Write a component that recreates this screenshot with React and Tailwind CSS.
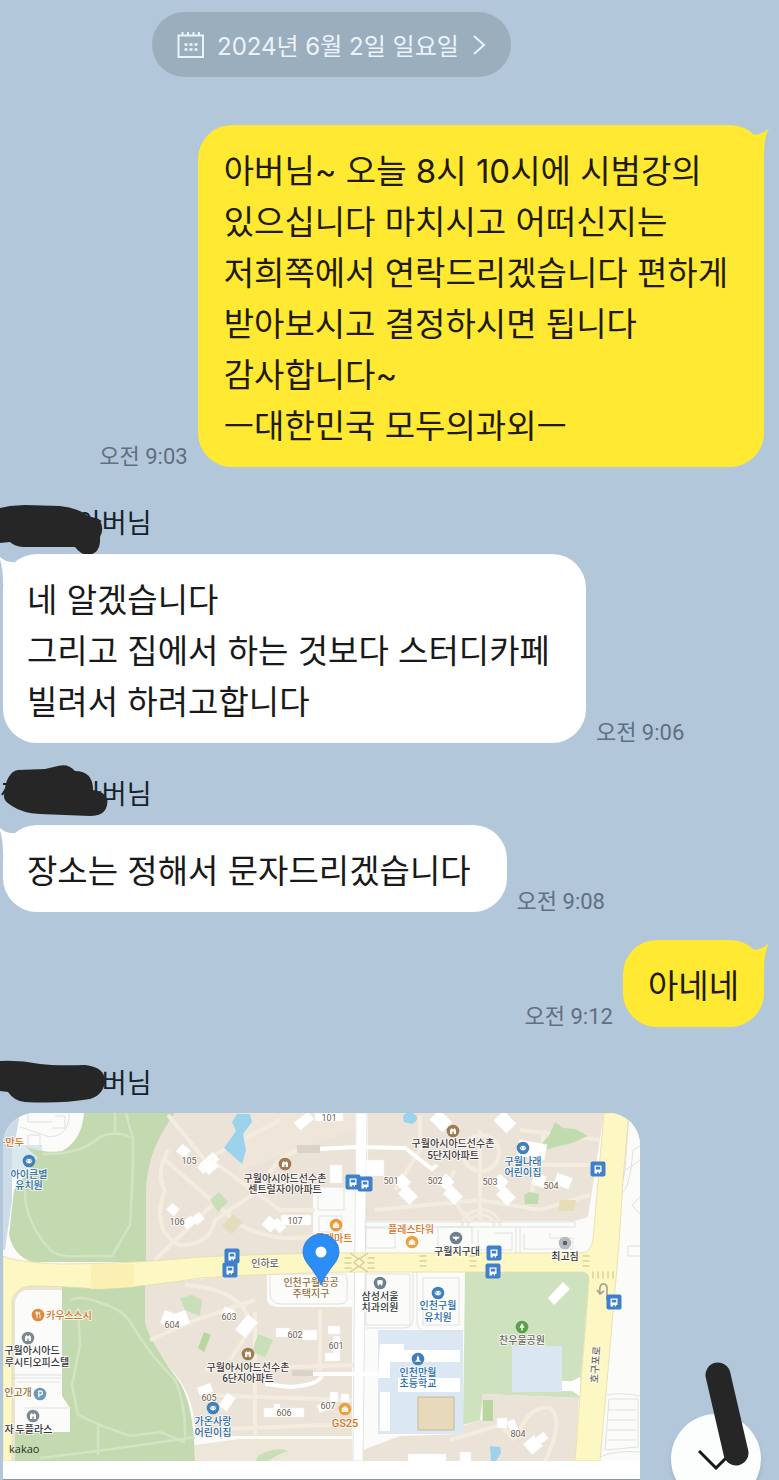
import React from "react";

const MESSAGE_FONT = "font-['Inter','Noto_Sans_CJK_KR',sans-serif]";
const LABEL_FONT = "font-['Roboto','Noto_Sans_CJK_KR',sans-serif]";

function Time({ children }) {
  return (
    <time className={`${LABEL_FONT} shrink-0 text-[22px] leading-5 text-[#5f7080]`}>
      {children}
    </time>
  );
}

function Sent({ time, children, className = "", padding = "pl-[26px] pr-9" }) {
  return (
    <div className={`flex items-end justify-end gap-[10px] pr-[15px] ${className}`}>
      <Time>{time}</Time>
      <div className={`relative rounded-[34px] bg-[#ffe933] pb-[15px] pt-[21px] ${padding}`}>
        <svg className="absolute -right-[5px] top-[3px] h-7 w-7" viewBox="0 0 28 28" aria-hidden="true">
          <path d="M12 7 Q21 7 28 0 Q23 9 23 28 L8 28 Z" fill="#ffe933" />
        </svg>
        <p className={`${MESSAGE_FONT} relative text-[33px] leading-[51px] text-[#1f1b08]`}>{children}</p>
      </div>
    </div>
  );
}

function Received({ time, children }) {
  return (
    <div className="mt-4 flex items-end gap-[10px] pl-[3px]">
      <div className="relative rounded-[34px] bg-white pb-[15px] pl-6 pr-9 pt-[21px]">
        <svg className="absolute -left-[5px] top-[2px] h-7 w-7 overflow-visible" viewBox="0 0 28 28" aria-hidden="true">
          <path d="M16 6 Q7 7 0 -1 Q5 8 5 28 L20 28 Z" fill="#fff" />
        </svg>
        <p className={`${MESSAGE_FONT} relative text-[33px] leading-[51px] text-[#191919]`}>{children}</p>
      </div>
      <Time>{time}</Time>
    </div>
  );
}

function Sender({ d, extra, className = "" }) {
  return (
    <div className={`relative h-[30px] pl-[77px] ${className}`}>
      <span className={`${LABEL_FONT} block text-[27px] leading-8 text-[#14222e]`}>아버님</span>
      <svg className="absolute -top-5 left-0 h-[70px] w-[120px]" viewBox="0 0 120 70" aria-hidden="true">
        {extra && <path d={extra} fill="none" stroke="#14222e" strokeWidth="2" />}
        <path d={d} fill="#262626" />
      </svg>
    </div>
  );
}

const INK = {
  dark: "#41393a",
  blue: "#276ba9",
  orange: "#d9731e",
  brown: "#9b7040",
  grey: "#6d6a62",
  num: "#6f6152",
  black: "#33363b",
};

const labels = [
  [13, 1146, "-만두", "orange"],
  [29, 1178, "아이큰별", "blue"],
  [29, 1189, "유치원", "blue"],
  [285, 1182, "구월아시아드선수촌", "dark"],
  [285, 1193, "센트럴자이아파트", "dark"],
  [453, 1147, "구월아시아드선수촌", "dark"],
  [453, 1159, "5단지아파트", "dark"],
  [523, 1165, "구월나래", "blue"],
  [523, 1176, "어린이집", "blue"],
  [411, 1233, "플레스타워", "orange"],
  [334, 1242, "롯데마트", "orange"],
  [265, 1267, "인하로", "grey"],
  [457, 1255, "구월지구대", "black"],
  [565, 1260, "최고짐", "black"],
  [311, 1286, "인천구월공공", "brown"],
  [311, 1297, "주택지구", "brown"],
  [380, 1300, "삼성서울", "black"],
  [380, 1311, "치과의원", "black"],
  [438, 1309, "인천구월", "blue"],
  [438, 1321, "유치원", "blue"],
  [522, 1344, "찬우물공원", "grey"],
  [418, 1376, "인천만월", "blue"],
  [418, 1387, "초등학교", "blue"],
  [69, 1319, "카우스스시", "orange"],
  [32, 1354, "구월아시아드", "black"],
  [37, 1366, "루시티오피스텔", "black"],
  [18, 1396, "인고개", "brown"],
  [9, 1433, "자", "black"],
  [34, 1433, "두플라스", "black"],
  [248, 1371, "구월아시아드선수촌", "dark"],
  [248, 1382, "6단지아파트", "dark"],
  [213, 1425, "가온사랑", "blue"],
  [213, 1436, "어린이집", "blue"],
];

const numbers = [
  [189, 1164, "105"], [177, 1225, "106"], [329, 1121, "101"], [295, 1224, "107"],
  [391, 1184, "501"], [435, 1184, "502"], [490, 1185, "503"], [551, 1189, "504"],
  [518, 1437, "804"], [229, 1320, "603"], [172, 1328, "604"], [295, 1338, "602"],
  [336, 1349, "601"], [209, 1401, "605"], [284, 1416, "606"], [328, 1409, "607"],
];

const pois = [
  [29, 1161, "#3f7fbb", "face"], [285, 1164, "#a07a50", "apt"], [453, 1131, "#a07a50", "apt"],
  [523, 1148, "#3f7fbb", "face"], [412, 1242, "#eba13c", "shop"], [336, 1225, "#eb9a35", "shop"],
  [456, 1238, "#6f7f8c", "bird"], [565, 1243, "#b3bac2", "dot"], [380, 1283, "#6f7f8c", "tooth"],
  [438, 1293, "#3f7fbb", "face"], [522, 1327, "#5c9f4c", "tree"], [418, 1359, "#3f7fbb", "school"],
  [38, 1315, "#d98a3e", "food"], [28, 1338, "#7d8893", "apt"], [40, 1394, "#6a9ab8", "park"],
  [33, 1416, "#7d8893", "apt"], [248, 1354, "#a07a50", "apt"], [213, 1408, "#3f7fbb", "face"],
  [345, 1409, "#eba13c", "shop"],
];

const glyphs = {
  face: <path d="M-3.5 .5 A3.5 3.2 0 0 1 3.5 .5 Q2.500 3 0 3 Q-2.500 3 -3.500 .5Z M-2.300 0H-.8M.8 0H2.300" fill="#fff" stroke="#3f7fbb" strokeWidth=".9" />,
  apt: <path d="M-3 3V-1L-1.500-3L0-1.500L1.500-3L3-1V3H.7V.5H-.7V3Z" fill="#fff" />,
  shop: <path d="M-3.200-.5 L0-3.200 L3.200-.5 V3 H-3.200Z M-1.200-1V-2.500H1.200V-1" fill="#fff" fillOpacity=".85" />,
  bird: <path d="M-3.800-1.500L-1-1L0-2L1-1L3.800-1.500Q3 1 1 1L0 3.300L-1 1Q-3 1-3.800-1.500Z" fill="#fff" />,
  dot: <rect x="-2" y="-2" width="4" height="4" rx="1" fill="#5c6066" />,
  tooth: <path d="M-2.800-2.500Q0-3.500 2.800-2.500Q3 1 1.600 3.200Q.8 1 0 1Q-.8 1-1.600 3.200Q-3 1-2.800-2.500Z" fill="#fff" />,
  tree: <path d="M0-4L2.500 .8H.7V3.500H-.7V.8H-2.500Z" fill="#fff" />,
  school: <path d="M0-4L1.200-1V1L3.500 2.800H-3.500L-1.200 1V-1Z" fill="#fff" />,
  food: <path d="M-2-3.300V-1M-1-3.300V3.300M0-3.300V-1H-2M2-3.300Q.8-1 2 .2V3.300" fill="none" stroke="#fff" strokeWidth=".9" />,
  park: <path d="M-1.200 3.200V-2.800H.6A1.700 1.700 0 0 1 .6 .8H-1.200" fill="none" stroke="#fff" strokeWidth="1.300" />,
};

const buses = [[353, 1182], [365, 1184], [232, 1256], [230, 1270], [494, 1253], [493, 1271], [598, 1169], [614, 1302]];

/* x, y, w, h, rotation of the white building footprints */
const buildings = [
  [178, 1146, 11, 10, 40], [197, 1158, 22, 10, -42], [168, 1205, 10, 9, 40], [183, 1218, 12, 9, -40], [193, 1214, 10, 9, -40],
  [295, 1116, 18, 10, -40], [315, 1113, 28, 8, 0], [330, 1165, 12, 18, 0], [264, 1218, 12, 12, 40],
  [274, 1219, 9, 13, -45], [281, 1215, 30, 10, 0], [203, 1160, 14, 12, -42], [366, 1160, 18, 16, 0], [396, 1176, 13, 12, 45],
  [402, 1187, 12, 16, -45], [440, 1176, 12, 12, 45], [447, 1187, 12, 16, -45], [494, 1176, 12, 12, 45], [500, 1188, 12, 16, -45],
  [434, 1112, 14, 18, -45], [498, 1113, 14, 18, -45], [518, 1142, 28, 16, 10], [533, 1174, 12, 12, 20], [555, 1175, 16, 12, 20],
  [223, 1308, 11, 9, 20], [240, 1316, 13, 20, 40], [162, 1312, 14, 14, 20], [174, 1312, 14, 14, -20], [276, 1328, 14, 9, 0],
  [303, 1330, 14, 10, 0], [328, 1326, 12, 8, 0], [333, 1336, 7, 20, 0], [325, 1353, 15, 8, 0], [198, 1385, 14, 9, -20],
  [222, 1394, 10, 16, 35], [264, 1408, 40, 9, 0], [274, 1404, 6, 9, 0], [318, 1403, 12, 8, -20], [330, 1392, 8, 10, 0], [341, 1394, 8, 8, 0],
  [497, 1418, 10, 10, 0], [509, 1420, 8, 15, -20], [526, 1438, 14, 14, -40], [537, 1434, 10, 8, -35], [408, 1454, 38, 12, 0], [460, 1452, 11, 14, 0],
];

function MapPicture() {
  return (
    <svg
      className="block w-full font-['Roboto','Noto_Sans_CJK_KR',sans-serif]"
      viewBox="3 1113 637 348"
      role="img"
      aria-label="인천구월공공주택지구 지도"
    >
      <rect x="3" y="1113" width="637" height="348" fill="#fbfbfa" />

      {/* parks on the west side */}
      <path d="M3 1113H20L12 1160V1200L5 1250H3Z" fill="#cbdbe8" />
      <path d="M12 1145H42V1160L30 1172H12Z" fill="#dbe8ee" />
      <path d="M84 1113Q82 1140 62 1151Q45 1154 25 1146L38 1158L14 1190L9 1235Q14 1256 32 1262H147V1190Q150 1150 175 1113Z" fill="#c3dab0" />
      <path d="M62 1284H147V1322Q152 1345 178 1380Q194 1402 195 1461H12V1432H70V1408L62 1396Z" fill="#c3dab0" />
      <path d="M12 1290L20 1284H62V1290H25Q16 1294 15 1302V1461H12Z" fill="#ebe3d6" />

      {/* apartment ground */}
      <path d="M175 1113Q147 1150 146 1190V1262L313 1258V1187H355V1113Z" fill="#ebe3d7" />
      <path d="M368 1113H604L588 1217L575 1221H363V1168H368Z" fill="#ebe3d7" />
      <path d="M145 1284L200 1279L267 1272V1300Q268 1306 278 1307H352V1436H195Q195 1400 178 1378Q148 1340 145 1322Z" fill="#ebe3d7" />
      <path d="M195 1445L240 1439H352V1461H195Z" fill="#efe6da" />
      <path d="M240 1113H355V1130L240 1170Z" fill="#efe6d9" />

      {/* footpaths in the parks */}
      <g fill="none" stroke="#d3e3c3" strokeWidth="2.500">
        <path d="M25 1190Q24 1220 50 1250Q60 1258 80 1256H112L130 1225Q134 1160 133 1140L126 1113M42 1154Q80 1155 100 1137Q115 1130 130 1137M115 1113V1132" />
        <path d="M70 1300Q80 1295 98 1302Q125 1310 132 1325Q150 1355 175 1380Q186 1405 185 1440M78 1308L80 1345L72 1385L78 1415L100 1425L130 1436L160 1432L185 1442M98 1426V1455M40 1458Q110 1450 195 1437" />
      </g>

      {/* footpaths between apartments */}
      <g fill="none" stroke="#f4ecdf" strokeWidth="4">
        <path d="M168 1115L205 1160L280 1120M168 1150Q155 1175 165 1190Q150 1230 180 1245Q210 1245 215 1220L260 1190Q275 1155 300 1150M163 1158L240 1225Q280 1245 315 1235M218 1165L280 1210H315M155 1260L212 1205" />
        <path d="M375 1210L480 1200L540 1210L590 1195M420 1115V1150L395 1190M480 1130V1220M455 1170Q440 1190 470 1220M545 1130L530 1200M520 1130L600 1140M540 1165H597" />
        <path d="M150 1340L195 1320L255 1300M185 1285Q250 1290 250 1330L230 1360M255 1312V1435M205 1370L355 1365M200 1395L352 1400M195 1430L350 1424M320 1310V1370" />
        <circle cx="481" cy="1153" r="18" />
        <path d="M462 1226A19 16 0 0 1 500 1226M468 1226A13 11 0 0 1 494 1226" strokeWidth="3" />
      </g>

      {/* white streets */}
      <path d="M356 1113H367L363 1461H353Z" fill="#fff" stroke="#dcdcdc" strokeWidth=".8" />
      <path d="M320 1149L355 1147L405 1148L432 1169L437 1165" fill="none" stroke="#fff" strokeWidth="4" />
      <path d="M310 1374H381L384 1362M322 1376Q318 1385 290 1387L265 1384" fill="none" stroke="#fff" strokeWidth="4" />
      <rect x="297" y="1145" width="23" height="8" fill="#dbd3c7" />
      <rect x="292" y="1370" width="21" height="6" fill="#dbd3c7" />

      {/* park, school and the south-east block */}
      <path d="M465 1272H590L579 1398L483 1394L480 1420L463 1425Z" fill="#cfe2c0" />
      <path d="M378 1330H463V1434H378Z" fill="#dbe7f2" />
      <path d="M380 1344H404V1350H460V1362H390V1378H378ZM380 1392H390V1431H380ZM398 1378H460V1392H398Z" fill="#fff" />
      <rect x="418" y="1397" width="36" height="33" fill="#e6dabb" stroke="#c9b994" />
      <rect x="512" y="1346" width="50" height="46" fill="#dae6f2" />
      <path d="M562 1381H572L580 1377V1396L572 1391H562Z" fill="#fff" />
      <path d="M363 1450L400 1436L463 1434L463 1426L482 1419V1394L579 1398L575 1461H363Z" fill="#ebe3d7" />
      <path d="M520 1430Q530 1405 550 1408Q565 1420 545 1461M450 1440L500 1425L515 1440" fill="none" stroke="#f4ecdf" strokeWidth="4" />
      <rect x="483" y="1400" width="10" height="21" fill="#b8d79f" />
      <path d="M548 1298L563 1282L570 1289L554 1305Z" fill="#fff" />

      {/* greens and water */}
      <path d="M555 1122L563 1128L575 1129L588 1136L572 1143L555 1147L543 1151L542 1143L549 1136Z" fill="#c0dcae" />
      <path d="M524 1195L530 1192L539 1194L538 1204H525Z" fill="#c0dcae" />
      <path d="M560 1200H576L574 1211H558Z" fill="#e6deb4" />
      <path d="M219 1192L228 1202L218 1212L210 1200Z" fill="#c8dfb8" />
      <path d="M233 1214L243 1222L232 1234L222 1226Z" fill="#e5dcbb" />
      <path d="M180 1298L192 1295L202 1300L200 1316L185 1310Z" fill="#c8dfb8" />
      <path d="M204 1332L211 1335L204 1352L198 1348Z" fill="#b8d79f" />
      <path d="M258 1334L273 1340L265 1357L252 1352Z" fill="#c8dfb8" />
      <path d="M258 1456Q275 1446 288 1451Q280 1453 268 1461H256Z" fill="#c8dfb8" />
      <path d="M237 1114H250L252 1122L243 1134L246 1150L242 1164L224 1148L236 1131L232 1122Z" fill="#9bd3ec" />
      <path d="M403 1117Q405 1111 413 1113Q420 1118 415 1122L412 1124L404 1122Z" fill="#9bd3ec" />
      <path d="M490 1446L500 1447L501 1453L496 1461H491Z" fill="#9bd3ec" />

      <g fill="#fff" stroke="#f0efee" strokeWidth=".5">
        {buildings.map(([x, y, w, h, r], i) => (
          <rect key={i} x={x} y={y} width={w} height={h} transform={`rotate(${r} ${x + w / 2} ${y + h / 2})`} />
        ))}
      </g>

      {/* city lots */}
      <g fill="none" stroke="#dedede" strokeWidth=".9">
        <path d="M28 1113V1122H52M28 1135H40V1148H28ZM55 1116H65V1128H52M20 1127L50 1137Q70 1135 69 1113" />
        <path d="M364 1222H575V1227H364M366 1228H395V1248H366ZM438 1227V1252M440 1227H472V1244M478 1230V1250H512V1233H495M516 1227V1253M520 1227V1253M524 1233V1249H573V1238H550V1233" />
        <path d="M318 1187H344V1210H318ZM319 1216H342V1232H319Z" />
        <path d="M270 1274H345Q348 1276 347 1290V1300Q345 1304 340 1304H280Q270 1303 270 1292ZM366 1274H410V1325H366V1274M413 1272V1320Q412 1328 404 1328H366M417 1272V1322Q418 1330 424 1331H463M423 1278H459V1325H423Z" />
        <path d="M12 1375H62M12 1378H62M17 1382H60M25 1408H69" />
        <path d="M629 1113L625 1170L620 1195Q630 1190 633 1150L640 1146M626 1170L640 1160M632 1205L640 1197M632 1205L640 1214M628 1246H640M628 1246V1256H640" />
        <path d="M607 1395Q620 1392 640 1396M609 1399H638V1447L605 1450ZM608 1410H636M608 1420H636M607 1430H636M607 1440H636M600 1457Q615 1450 640 1452" />
      </g>

      {/* main roads */}
      <g fill="#fdf7c3" stroke="#e7dca6" strokeWidth=".8">
        <path d="M3 1256Q15 1262 60 1264Q130 1264 200 1257Q290 1253 345 1253H582Q591 1252 593 1240L604 1113H629L623 1180Q619 1250 615 1290L600 1461H575L589 1280Q589 1272 582 1272H345Q260 1274 200 1278Q145 1287 100 1289Q60 1286 30 1286Q15 1288 12 1300V1461H3Z" />
      </g>
      <path d="M91 1264H134V1287L91 1289Z" fill="#fbf0b2" />
      <path d="M348 1257V1269M371 1257V1269M423 1255V1270M473 1255V1270M586 1255V1270" stroke="#e5daa6" strokeWidth="7" strokeDasharray="2 3" />
      <path d="M592 1275H616" stroke="#e5daa6" strokeWidth="7" strokeDasharray="2 3" />
      <g fill="none" stroke="#d8cf9e" strokeWidth="1.500">
        <path d="M350 1253L359 1259L368 1253M350 1272L359 1266L368 1272M354 1262.500L359 1258L364 1262.500L359 1267Z" />
      </g>
      <path d="M607 1300V1287Q606 1283 602 1284Q599 1286 600 1293M597 1290L600 1294L604 1291" fill="none" stroke="#a9a597" strokeWidth="1.700" />

      {buses.map(([x, y]) => (
        <g key={`${x}-${y}`} transform={`translate(${x} ${y})`}>
          <rect x="-7.500" y="-7.500" width="15" height="15" rx="2" fill="#3f80cb" />
          <path d="M-3.500-3.500H3.500V3H2V4.500H.8V3H-.8V4.500H-3.500Z" fill="#fff" />
          <path d="M-2.200-2.200H2.200V.5H-2.200Z" fill="#3f80cb" />
        </g>
      ))}

      {pois.map(([x, y, c, k]) => (
        <g key={`${x}-${y}`} transform={`translate(${x} ${y})`}>
          <circle r="6.300" fill={c} />
          {glyphs[k]}
        </g>
      ))}

      <g textAnchor="middle" stroke="#fff" strokeOpacity=".75" strokeWidth="2" strokeLinejoin="round" style={{ paintOrder: "stroke" }}>
        <g fontSize="10" fontWeight="500">
          {labels.map(([x, y, t, c], i) => (
            <text key={i} x={x} y={y} fill={INK[c]}>{t}</text>
          ))}
          <text x="345" y="1427" fontSize="11" fill={INK.orange}>GS25</text>
          <text transform="translate(599 1365) rotate(-86)" fill={INK.grey}>호구포로</text>
        </g>
        <g fontSize="9" fill={INK.num}>
          {numbers.map(([x, y, t]) => (
            <text key={t} x={x} y={y}>{t}</text>
          ))}
        </g>
      </g>
      <text x="9" y="1453" fontSize="11" fill="#2c302b" className="font-['Open_Sans',sans-serif]">kakao</text>

      <path d="M321 1285Q318 1277 311 1268Q303 1259 303 1252A18 18 0 0 1 339 1252Q339 1259 331 1268Q324 1277 321 1285Z" fill="#2b8df5" stroke="#2474cf" strokeWidth=".8" />
      <circle cx="321" cy="1252" r="5.500" fill="#fff" />
    </svg>
  );
}

export default function App() {
  return (
    <main className="relative min-h-screen overflow-hidden bg-[#b2c7da] pt-3">
      <div className="pl-[152px]">
        <button
          type="button"
          className="flex h-[65px] items-center rounded-full bg-[#9baebd] pl-[25px] pr-[25px] text-[#ebf4fc]"
        >
          <svg className="h-7 w-7" viewBox="0 0 28 28" fill="none" stroke="currentColor" strokeWidth="2" aria-hidden="true">
            <path d="M1.500 4.500H26V26H1.500ZM5.500 1V5M11 1V5M16.500 1V5M22 1V5" />
            <path d="M7.500 13.500H20.500M7.500 18.500H20.500" strokeWidth="2.500" strokeDasharray="3 2" />
          </svg>
          <span className={`${MESSAGE_FONT} ml-3 pt-1 text-2xl leading-7`}>2024년 6월 2일 일요일</span>
          <svg className="ml-[14px] h-5 w-[13px]" viewBox="0 0 13 20" fill="none" stroke="currentColor" strokeWidth="2" aria-hidden="true">
            <path d="M1 1L11 10L1 19" />
          </svg>
        </button>
      </div>

      <Sent time="오전 9:03" className="mt-12">
        아버님~ 오늘 8시 10시에 시범강의<br />
        있으십니다 마치시고 어떠신지는<br />
        저희쪽에서 연락드리겠습니다 편하게<br />
        받아보시고 결정하시면 됩니다<br />
        감사합니다~<br />
        ㅡ대한민국 모두의과외ㅡ
      </Sent>

      <Sender
        className="mt-[41px]"
        d="M0 20L10 18L25 17L60 18Q78 20 88 28L99 31Q105 40 100 49Q101 66 88 67Q80 66 75 59H22Q14 58 10 54L0 55Z"
      />
      <Received time="오전 9:06">
        네 알겠습니다<br />
        그리고 집에서 하는 것보다 스터디카페<br />
        빌려서 하려고합니다
      </Received>

      <Sender
        className="mt-9"
        extra="M3 25H10M9 25L2 36"
        d="M4 36Q6 13 18 11L45 10L58 7Q68 4 75 12Q93 12 93 31Q110 34 107 46Q105 57 90 57L40 55Q22 54 12 47Q3 42 4 36Z"
      />
      <Received time="오전 9:08">장소는 정해서 문자드리겠습니다</Received>

      <Sent time="오전 9:12" className="mt-7" padding="px-[25px]">아네네</Sent>

      <Sender
        className="mt-[41px]"
        d="M0 13Q20 12 40 16Q55 18 85 17Q104 19 105 32Q104 47 90 51Q60 56 25 54Q14 53 8 44L0 43Z"
      />
      <a
        href="#map"
        className="ml-[3px] mt-[15px] block w-[637px] max-w-full overflow-hidden rounded-t-[32px] border-b border-[#8b98a4] bg-white pb-[18px]"
      >
        <MapPicture />
      </a>

      <button
        type="button"
        aria-label="맨 아래로"
        className="absolute -bottom-6 right-[18px] flex h-[90px] w-[90px] justify-center rounded-full bg-[#fcfefe] pt-9 text-[#191919] shadow-md"
      >
        <svg className="h-5 w-9" viewBox="0 0 36 20" fill="none" stroke="currentColor" strokeWidth="3" aria-hidden="true">
          <path d="M1 1L18 18L35 1" />
        </svg>
      </button>
      <svg className="absolute bottom-[14px] right-[30px] h-[104px] w-[44px]" viewBox="0 0 44 104" aria-hidden="true">
        <path d="M13 13L31 91" stroke="#262626" strokeWidth="25" strokeLinecap="round" />
      </svg>
    </main>
  );
}
